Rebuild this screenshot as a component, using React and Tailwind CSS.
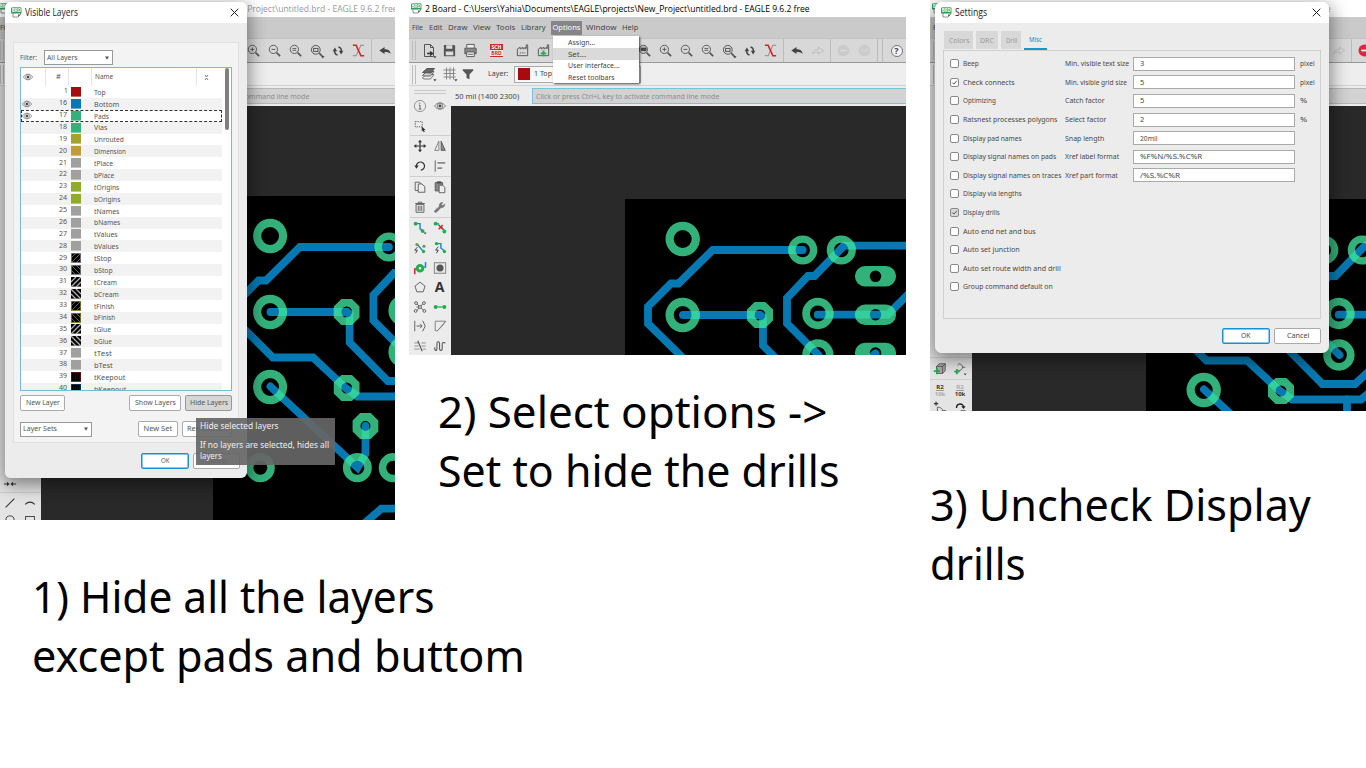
import { useId, useLayoutEffect, useRef, useState } from "react";

/* A line of text that is condensed or widened to an exact width. */
function T({ w, className = "", children }) {
  const ref = useRef(null);
  const [k, setK] = useState(1);
  useLayoutEffect(() => {
    if (ref.current && w) setK(w / ref.current.offsetWidth);
  }, [w, children]);
  return (
    <span className={"inline-block shrink-0 whitespace-nowrap " + className} style={{ width: w }}>
      <span ref={ref} className="inline-block origin-left" style={{ transform: `scaleX(${k})` }}>
        {children}
      </span>
    </span>
  );
}

function Svg({ s = 16, className = "", children }) {
  return (
    <svg width={s} height={s} viewBox="0 0 16 16" fill="none" stroke="#555" strokeWidth="1" className={"shrink-0 " + className}>
      {children}
    </svg>
  );
}

const G = "#1faf4b";
const B = "#1b87c9";
const dot = (x, y, r = 1.9, f = G) => <circle cx={x} cy={y} r={r} fill={f} stroke="none" />;
const caret = <path d="M12.3 13.2h3.2l-1.6 2.2z" fill="#444" stroke="none" />;
const lens = (
  <>
    <circle cx="6.8" cy="6.8" r="4.4" />
    <path d="M10.2 10.2l3.8 3.8" strokeWidth="1.7" />
  </>
);

const icons = {
  newdoc: <><path d="M3.5 1.500h6l3 3v9h-9zM9.500 1.500v3h3" /><path d="M6 10.500h5M9 8.500l2.500 2-2.500 2" strokeWidth="1.500" stroke="#333" />{caret}</>,
  save: <><path d="M2 2h11l1 1v11H2z" fill="#555" stroke="none" /><path d="M4.500 2.500h6.500v3.500h-6.500zM4 9h8v4H4z" fill="#ddd" stroke="none" /></>,
  print: <><path d="M4 5V1.500h8V5" fill="#eee" /><path d="M2 5.500h12v6H2z" fill="#888" /><path d="M4 9.500h8v5H4z" fill="#eee" /><path d="M5.500 12h5" /></>,
  mill: <><path d="M2.500 6.500v7h11v-7M2.500 6.500l3-2v2l3-2v2l3-2v2M12 6V2h1.500v5" /><path d="M5 10.500h6" strokeDasharray="1.500 1" /></>,
  millPlus: <><path d="M2.500 6.500v7h11v-7M2.500 6.500l3-2v2l3-2v2l3-2v2M12 6V2h1.500v5" /><path d="M8 8v6M5 11h6" stroke={G} strokeWidth="2" /></>,
  fit: <><circle cx="6.800" cy="6.800" r="4.400" fill="#bbb" /><path d="M10.200 10.200l3.800 3.800" strokeWidth="1.700" /><path d="M4 5h6v3.500H4z" fill="#444" stroke="none" /></>,
  zin: <>{lens}<path d="M6.800 4.700v4.200M4.700 6.800h4.200" /></>,
  zout: <>{lens}<path d="M4.700 6.800h4.200" /></>,
  zeq: <>{lens}<path d="M4.800 5.800h4M4.800 7.800h4" /></>,
  zsel: <>{lens}<rect x="4.600" y="5.400" width="4.400" height="3" />{caret}</>,
  refresh: <><path d="M7.500 12.500C4.500 12 3.800 9.500 4.400 6.500M8.500 3.500c3 .5 3.700 3 3.100 6" strokeWidth="1.700" stroke="#444" /><path d="M1.800 8.200L4.500 4l2.500 4.200zM14.200 7.800L11.500 12 9 7.800z" fill="#444" stroke="none" /></>,
  rip: <><path d="M14 2.500h-3.500L5.500 13.500H2" stroke="#999" strokeWidth="1.300" /><path d="M2 2.500h3.500l5 11H14" stroke="#d9221f" strokeWidth="1.600" /></>,
  undo: <path d="M1.500 7.500L7.500 3.500v2.600c4 0 6.500 1.400 7 5.400-1.500-2-3.500-2.500-7-2.500v2.500z" fill="#444" stroke="none" />,
  redo: <path d="M14.500 7.500L8.500 3.500v2.600c-4 0-6.500 1.400-7 5.400 1.500-2 3.500-2.500 7-2.500v2.500z" stroke="#bbb" />,
  stopOff: <><circle cx="8" cy="8" r="6.200" fill="#cacaca" stroke="none" /><path d="M4.500 8h7" stroke="#ddd" strokeWidth="1.600" /></>,
  stop: <><circle cx="8" cy="8" r="6.400" fill="#e0263f" stroke="none" /><path d="M4.500 8h7" stroke="#fff" strokeWidth="1.800" /></>,
  go: <><circle cx="8" cy="8" r="6.200" fill="#cacaca" stroke="none" /><circle cx="6" cy="8" r="1.600" stroke="#d8d8d8" /><circle cx="10" cy="8" r="1.600" stroke="#d8d8d8" /></>,
  layers: <><path d="M1.500 12l3.500-3.500h8L9.500 13h-7z" fill="#eee" stroke="#777" /><path d="M1.500 9.500L5.500 5.500h7.500L9.500 10h-7z" fill="#ccc" stroke="#666" /><path d="M1.500 6.500L6 2.500h7.500L10 7z" fill="#666" stroke="#555" />{caret}</>,
  grid: <><path d="M4.500 1.500v12M8 1.500v12M11.500 1.500v12M1.500 4h12M1.500 7.500h12M1.500 11h12" stroke="#888" />{caret}</>,
  filter: <path d="M2 2.500h12v1.500L9.700 8.500V14l-3.400-1.500v-4L2 4z" fill="#555" stroke="none" />,
  info: <><circle cx="8" cy="8" r="6.400" stroke="#888" /><path d="M8 7v4.500M6.700 7H8M6.500 11.500h3" /><circle cx="7.800" cy="4.700" r=".8" fill="#555" stroke="none" /></>,
  eye: <><path d="M1.800 8C5 3 11 3 14.200 8 11 13 5 13 1.800 8z" stroke="#777" /><circle cx="8" cy="8" r="3.200" stroke="#777" /><circle cx="8" cy="8" r="1.700" fill="#444" stroke="none" /></>,
  select: <><rect x="2.500" y="3" width="8" height="6" strokeDasharray="1.600 1.100" /><path d="M10 8.500l4.500 4-2 .2 1 2-1.300.5-.9-2-1.300 1z" fill="#333" stroke="none" /></>,
  move: <><path d="M8 3v10M3 8h10" strokeWidth="1.400" stroke="#333" /><path d="M8 .8l2.300 3H5.700zM8 15.200l2.300-3H5.700zM.8 8l3-2.300v4.600zM15.200 8l-3-2.300v4.600z" fill="#333" stroke="none" /></>,
  mirror: <><path d="M6.700 2.500v10.500H2z" stroke="#777" /><path d="M9.300 2.500v10.500H14z" fill="#888" stroke="#555" /></>,
  rotate: <><path d="M4 8.500A4.600 4.600 0 1 1 9 12.600" strokeWidth="1.400" stroke="#333" /><path d="M1.500 7.500h5L4 11z" fill="#333" stroke="none" /></>,
  align: <><path d="M2.500 1.500v13" /><path d="M5 4.500h9M5 10.500h5.500" strokeWidth="2" stroke="#888" /></>,
  copy: <><path d="M2.500 2.500h5l2.500 2.500v7h-7.500z" /><path d="M6 4.500h4l3.500 3v6.500H6z" fill="#eee" /></>,
  paste: <><path d="M2.500 3h8.500v9.500H2.500z" fill="#888" /><path d="M7 6h4l2.500 2.500v6H7z" fill="#eee" /><path d="M5 2h4v1.500H5z" fill="#444" /></>,
  trash: <><path d="M3.500 5h9v9h-9zM2.500 4h11M6 4V2.500h4V4M6 6.500v6M8 6.500v6M10 6.500v6" /></>,
  wrench: <path d="M2 13.800c-.8-1 .2-2 .8-2.500l4.500-4c-.8-2.800 1.500-5 4-4.500L9.500 4.800l1.700 1.700 2-1.900c.8 2.400-1.500 4.700-4 4.100l-4.400 4.500c-.7.800-1.800 1.400-2.800.6z" fill="#777" stroke="#555" strokeWidth=".5" />,
  route: <><path d="M3 3h5v6l4 2.500" stroke={B} strokeWidth="1.600" />{dot(3, 3, 2.2)}{dot(11, 11.5, 2.2)}{caret}</>,
  ripup: <><path d="M3 3.500h4M10 7l3 4.500" stroke={B} strokeWidth="1.600" />{dot(3, 3, 2.2)}{dot(13, 12, 2.2)}<path d="M6.500 4.500l4.500 5M11 4.500l-4.500 5" stroke="#e02020" strokeWidth="1.600" /></>,
  fanout: <><path d="M5 4l6 7" stroke={B} strokeWidth="1.600" />{dot(4.5, 4, 1.8, "#6a9a4b")}{dot(12.5, 6, 1.8, "#6a9a4b")}{dot(12, 12)}<path d="M5 7L2 10.500h3L3 14" stroke="#333" /></>,
  auto: <><path d="M4 3h5v5l4 3.500" stroke={B} strokeWidth="1.600" />{dot(4, 3)}{dot(13, 12)}<path d="M6 6.500L3 10.500h3L4 14" stroke="#333" /></>,
  via: <><path d="M2 15V9h4" stroke="#d22" strokeWidth="1.700" /><path d="M14.300 1v6H10" stroke={B} strokeWidth="1.700" /><circle cx="8" cy="8.300" r="3.200" fill="#fff" stroke={G} strokeWidth="3.400" /></>,
  hole: <><rect x="1.500" y="2" width="13" height="12" stroke="#777" fill="#e8e8e8" /><circle cx="8" cy="8" r="4" fill="#555" stroke="none" /></>,
  polygon: <path d="M8 2.500l5.800 4.500-2.200 6.500H4.400L2.200 7z" />,
  ratsnest: <><path d="M4 4l4 4 4-4.500M8 8l-4 4.500M8 8l4.500 4M8 8H4" /><g fill="#eee"><circle cx="3.500" cy="3.500" r="1.600" /><circle cx="12.500" cy="3.500" r="1.600" /><circle cx="3" cy="12.500" r="1.600" /><circle cx="13" cy="12.500" r="1.600" /><circle cx="8" cy="8" r="1.600" /></g></>,
  airwire: <><path d="M3 8h10" stroke={G} strokeWidth="1.400" />{dot(3, 8, 2.2)}{dot(13, 8, 2.2)}</>,
  split: <><path d="M2 2v12M4 8h6M8 5.500L10.500 8 8 10.500M11 2l3 6-3 6" /></>,
  miter: <path d="M2.500 2.500h12L10 8.500l-5 5H2.500zM14.500 2.500L5 13.500" stroke="#777" />,
  slice: <><path d="M1.500 4.500h5M9.500 4.500h5M1.500 8h5M9.500 8h5M1.500 11.500h6M11 11.500h4" stroke="#888" /><path d="M5.500 2l5 12" strokeWidth="1.300" /></>,
  meander: <path d="M2 9.500v2c0 2 2.500 2 2.500 0V5c0-2.500 3-2.500 3 0v6.500c0 2 3 2 3 0V5.500c0-1.800 2.500-1.800 3.500-.5" strokeWidth="1.200" />,
  arrows: <><path d="M1 8h5M15 8h-5" strokeWidth="1.400" stroke="#333" /><path d="M7.500 8l-3-2.500v5zM8.500 8l3-2.500v5z" fill="#333" stroke="none" /></>,
  line: <path d="M3 13L13 3" stroke="#333" strokeWidth="1.200" />,
  arc: <path d="M2.500 9.500q5.500-5 11 0" stroke="#333" strokeWidth="1.200" />,
  circle: <circle cx="8" cy="8" r="4.700" stroke="#333" />,
  rect: <rect x="3" y="4" width="10" height="8" stroke="#333" />,
  part: <><path d="M4 5l3-3h7v8l-3 3H4z" fill="#aaa" /><path d="M4 5h7v8M11 5l3-3" /><path d="M4.500 7v7M1 10.500h7" stroke={G} strokeWidth="2" /></>,
  gate: <><path d="M5 3.500h1M6 2c7 0 6 8 0 8M11 6h3" /><path d="M4.500 8v6M1.500 11h6" stroke={G} strokeWidth="2" />{caret}</>,
  pinswap: <><path d="M1 3h5M3.500 .5v5" stroke="#333" strokeWidth="1.300" /><path d="M5 12V7c6 0 8 5 4 7M11 11h4" /></>,
  replace: <><path d="M4 8c0-6 8-6 8-1" strokeWidth="1.600" stroke="#222" /><path d="M9.500 6h5L12 9z" fill="#222" stroke="none" /><path d="M3 12h4M9 11h5v3H9z" /></>,
};
const Icon = ({ n, s = 14 }) => <Svg s={s}>{icons[n]}</Svg>;

function AppIcon({ className = "" }) {
  return (
    <span className={"relative flex h-[11px] w-[11px] shrink-0 flex-col items-center " + className}>
      <svg width="11" height="11" viewBox="0 0 11 11">
        <path d="M2 1h7.500v6.500L7 10H2z" fill="#fff" stroke="#777" strokeWidth=".8" />
        <path d="M9.500 7.500H7V10z" fill="#666" />
        <rect x="0" y=".500" width="10.500" height="6" rx=".6" fill="#2f9e58" />
      </svg>
      <span className="absolute left-0 top-[1px] w-[11px] text-center text-[4.5px] leading-[5px] font-bold text-white">BRD</span>
    </span>
  );
}

/* ---------- board ---------- */
const traces = [
  "177.700,51 87.700,51 53.500,84.500 46,84.500 23,107.500 23,124.500 60.500,161.500 101,161.500 134,192 146,200.500 215,200.500 224,193",
  "58,116 135,116",
  "135,116 138,118 138,146.500 176.500,185 209,185 222,173",
  "201,200.500 201,250",
  "58,190.500 146,271.500 154,258 154,230",
  "281,46.700 219,46.700 189.500,77 183,77 162,99 162,124.500 193.500,156",
  "192.700,115.700 262.700,115.700 283,95.500",
  "243,161 250.500,154.500",
  "151,329 170,312.700 192,312.700",
];
const ring = (x, y, R, r) => {
  const c = (q) => `M${x - q} ${y}a${q} ${q} 0 1 0 ${2 * q} 0a${q} ${q} 0 1 0 ${-2 * q} 0z`;
  return c(R) + c(r);
};
const oct = (x, y, R, r) => {
  const t = R * 0.414;
  return `M${x - t} ${y - R}h${2 * t}L${x + R} ${y - t}v${2 * t}L${x + t} ${y + R}h${-2 * t}L${x - R} ${y + t}v${-2 * t}z` + ring(x, y, 0.01, r);
};
const slot = (x, y) => `M${x - 10.3} ${y - 10.3}h20.600a10.300 10.300 0 0 1 0 20.600h-20.600a10.300 10.300 0 0 1 0-20.600z` + ring(x, y, 0.01, 5.8);
const pads = [
  ring(57.7, 40, 17.2, 9), ring(57.7, 116, 17.2, 9), ring(57.7, 191, 17.2, 9),
  ring(177.7, 51, 14.6, 7.3), ring(216.3, 51, 14.6, 7.3),
  ring(192.9, 114.5, 15.7, 8), ring(192.9, 156, 15.7, 8),
  oct(135, 116, 13, 5.5), oct(135, 192, 13, 5.5), oct(154, 230, 13, 5),
  ring(47.8, 271.7, 14.6, 7), ring(145.8, 271.7, 14.6, 7), ring(182, 271.7, 14.6, 7),
  slot(250.5, 77.3), slot(250.5, 115.7), slot(250.5, 154),
].join("");

function Board() {
  const id = useId();
  const lines = (c) => traces.map((p) => <polyline key={p} points={p} fill="none" stroke={c} strokeWidth="7.800" strokeLinecap="round" />);
  return (
    <svg width="290" height="330" className="block shrink-0 bg-black">
      <clipPath id={id}><path d={pads} clipRule="evenodd" /></clipPath>
      {lines("#0679b2")}
      <path d={pads} fill="#33b17a" fillRule="evenodd" />
      <g clipPath={`url(#${id})`}>{lines("#33cf9c")}</g>
    </svg>
  );
}

/* ---------- main window ---------- */
const Cell = ({ n, s = 14, children }) => (
  <span className="flex w-[21px] shrink-0 items-center justify-center">{n ? <Icon n={n} s={s} /> : children}</span>
);
const Bar = ({ className = "" }) => <span className={"h-full w-px shrink-0 bg-[#bcbcbc] " + className} />;
const Handle = () => (
  <span className="flex h-[19px] w-[9px] shrink-0 justify-center gap-[2px]">
    <span className="w-px bg-[#bdbdbd]" />
    <span className="w-px bg-[#bdbdbd]" />
  </span>
);

const menus = [["File", 11, "pl-[3px]"], ["Edit", 13, "pl-[6px]"], ["Draw", 20, "pl-[6px]"], ["View", 17, "pl-[5px]"], ["Tools", 19, "pl-[6px]"], ["Library", 25, "pl-[6px]"]];

function MainWindow({ active, left, sidebar, board, stop }) {
  return (
    <div className="flex h-full w-[540px] shrink-0 flex-col bg-[#ececec]">
      <div className={"flex h-[17px] shrink-0 items-center bg-white pl-[2px] font-['Open_Sans',sans-serif] text-[9.500px] " + (active ? "text-black" : "text-[#999]")}>
        <AppIcon />
        <T w={385} className="ml-[3px] pt-[1px]">2 Board - C:\Users\Yahia\Documents\EAGLE\projects\New_Project\untitled.brd - EAGLE 9.6.2 free</T>
      </div>
      <div className="flex h-[21px] shrink-0 items-center bg-[#cacaca] text-[7.500px] text-[#444]">
        {menus.map(([m, w, p]) => <span key={m} className={"shrink-0 pt-[1px] " + p}><T w={w}>{m}</T></span>)}
        <span className={"ml-[5px] flex h-[14px] w-[31px] shrink-0 items-center justify-center pt-[1px] " + (active ? "bg-[#858585] text-white" : "")}><T w={28}>Options</T></span>
        <T w={30} className="ml-[4px] pt-[1px]">Window</T>
        <T w={16} className="ml-[6px] pt-[1px]">Help</T>
      </div>
      <div className="flex h-[25px] shrink-0 items-center border-t border-b border-t-[#c2c2c2] border-b-[#999] bg-[#d8d8d8]">
        <Handle />
        <Cell n="newdoc" s={16} /><Cell n="save" s={15} /><Cell n="print" s={15} />
        <span className="w-[5px] shrink-0" />
        <Cell>
          <span className="flex h-[13px] w-[13px] flex-col bg-[#cf2a2a] text-center text-[5px] leading-[6px] font-bold text-white">
            <span>SCH</span><span className="h-[6px] bg-[#e8e8e8] text-[#c33]">BRD</span>
          </span>
        </Cell>
        <span className="w-[5px] shrink-0" />
        <Cell n="mill" s={15} /><Cell n="millPlus" s={15} />
        <span className="w-[80px] shrink-0" />
        <Cell n="fit" s={15} /><Cell n="zin" s={15} /><Cell n="zout" s={15} /><Cell n="zeq" s={15} /><Cell n="zsel" s={16} /><Cell n="refresh" /><Cell n="rip" s={15} />
        <Bar className="mx-[2px]" />
        <Cell n="undo" /><Cell n="redo" />
        <Bar className="mx-[2px]" />
        <Cell n={stop ? "stop" : "stopOff"} s={15} /><Cell n="go" s={15} />
        <Bar className="mx-[2px]" /><Bar className="mr-[3px] ml-[2px]" />
        <Cell>
          <span className="flex h-[12px] w-[12px] items-center justify-center rounded-full border border-[#777] bg-[#f4f4f4] text-[9px] font-bold text-[#444]">?</span>
        </Cell>
      </div>
      <div className="flex h-[23px] shrink-0 items-center border-b border-[#d2d2d2] bg-[#eee] text-[7.500px] text-[#444]">
        <Handle />
        <Cell n="layers" s={16} /><Cell n="grid" s={16} /><span className="-ml-[3px] flex"><Cell n="filter" /></span>
        <T w={20} className="ml-[10px]">Layer:</T>
        <span className="ml-[6px] flex h-[17px] w-[127px] shrink-0 items-center gap-[4px] border border-[#aaa] bg-[#f8f8f8] pl-[3px]">
          <span className="h-[12px] w-[12px] bg-[#a80a0e]" /><T w={18}>1 Top</T>
        </span>
      </div>
      <div className="flex min-h-0 flex-1">
        <div className={"flex shrink-0 flex-col overflow-hidden " + left}>{sidebar}</div>
        <div className="flex min-w-0 flex-1 flex-col">
          <div className="flex h-[20px] shrink-0 items-center text-[7.500px] text-[#444]">
            <T w={64} className="ml-[4px] pt-[1px]">50 mil (1400 2300)</T>
            <span className={"ml-[13px] flex h-[16px] flex-1 items-center border bg-[#d2d2d2] pt-[1px] pl-[3px] text-[#8c8c8c] " + (active ? "border-[#79c3d8]" : "border-[#b8b8b8]")}>
              <T w={183}>Click or press Ctrl+L key to activate command line mode</T>
            </span>
          </div>
          <div className="flex flex-1 overflow-hidden bg-[#292929]"><div className={board}><Board /></div></div>
        </div>
      </div>
    </div>
  );
}

const Row = ({ a, b, h = "h-[20px]" }) => (
  <div className={"flex w-[41px] shrink-0 items-center " + h}>
    {[a, b].map((n, i) => (
      <span key={i} className="flex w-[20px] shrink-0 items-center justify-center">{typeof n === "string" ? <Icon n={n} s={14} /> : n}</span>
    ))}
  </div>
);
const Rule = () => <div className="h-px shrink-0 bg-[#cfcfcf]" />;

/* ---------- dialogs ---------- */
function Titlebar({ title, w }) {
  return (
    <div className="flex h-[21px] shrink-0 items-center bg-white pr-[8px] pl-[6px] font-['Open_Sans',sans-serif] text-[10px] text-[#222]">
      <AppIcon />
      <T w={w} className="ml-[3px]">{title}</T>
      <svg width="9" height="9" viewBox="0 0 9 9" className="ml-auto"><path d="M.7.7l7.600 7.600M8.300.7L.7 8.300" stroke="#222" strokeWidth="1" /></svg>
    </div>
  );
}
const Btn = ({ w, tw, kind = "", children }) => (
  <span
    className={"flex h-[16px] shrink-0 items-center justify-center rounded-[2px] border " + (kind === "ok" ? "border-[#1493cf] bg-white shadow-[inset_0_0_0_0.500px_#1493cf]" : kind === "on" ? "border-[#999] bg-[#d6d6d6]" : "border-[#aaa] bg-white")}
    style={{ width: w }}
  >
    <T w={tw}>{children}</T>
  </span>
);
const Select = ({ w, tw, children }) => (
  <span className="flex h-[15px] shrink-0 items-center border border-[#999] bg-white pr-[3px] pl-[2px]" style={{ width: w }}>
    <T w={tw}>{children}</T>
    <svg width="4" height="4" viewBox="0 0 4 4" className="ml-auto"><path d="M0 .500h4L2 3.700z" fill="#555" /></svg>
  </span>
);

/* [number, name, name width, colour, hatch] */
const layers = [
  [1, "Top", 12, "#a50b0f"], [16, "Bottom", 25, "#0679b2"], [17, "Pads", 15, "#33b17a"], [18, "Vias", 13, "#33b17a"],
  [19, "Unrouted", 30, "#a3a32b"], [20, "Dimension", 32, "#c29c3a"], [21, "tPlace", 19, "#a0a0a0"], [22, "bPlace", 20, "#a0a0a0"],
  [23, "tOrigins", 25, "#8fab2b"], [24, "bOrigins", 26, "#8fab2b"], [25, "tNames", 25, "#a0a0a0"], [26, "bNames", 26, "#a0a0a0"],
  [27, "tValues", 24, "#a0a0a0"], [28, "bValues", 25, "#a0a0a0"],
  [29, "tStop", 18, "#909090", "up"], [30, "bStop", 19, "#909090", "down"],
  [31, "tCream", 23, "#b0b0b0", "UP"], [32, "bCream", 25, "#b0b0b0", "DOWN"],
  [33, "tFinish", 20, "#8f8f35", "up"], [34, "bFinish", 21, "#8f8f35", "down"],
  [35, "tGlue", 17, "#b0b0b0", "UP"], [36, "bGlue", 18, "#b0b0b0", "DOWN"],
  [37, "tTest", 18, "#a0a0a0"], [38, "bTest", 19, "#a0a0a0"],
  [39, "tKeepout", 31, "#7c1418", "dots"], [40, "bKeepout", 32, "#0d4a70", "dots"],
];

function Swatch({ c, hatch }) {
  const bold = hatch === "UP" || hatch === "DOWN";
  const flip = hatch === "down" || hatch === "DOWN";
  return (
    <svg width="10" height="10" viewBox="0 0 10 10" className="ml-[4px] shrink-0">
      <rect width="10" height="9.600" fill={hatch ? "#000" : c} />
      {hatch && hatch !== "dots" && (
        <g transform={flip ? "matrix(-1 0 0 1 10 0)" : undefined}>
          <path d="M0 5L5 0M0 10L10 0M5 10L10 5" stroke={c} strokeWidth={bold ? 1.3 : 0.7} />
        </g>
      )}
      {hatch === "dots" && <path d="M2 3h7M2 5h7M2 7h7" stroke={c} strokeWidth=".7" strokeDasharray=".7 1.300" />}
      {hatch && !bold && <rect x=".400" y=".400" width="9.200" height="8.900" fill="none" stroke={c} strokeWidth=".7" />}
    </svg>
  );
}

function LayersDialog() {
  return (
    <div className="absolute top-[2px] left-[5px] flex h-[476px] w-[242px] flex-col overflow-hidden rounded-[6px] bg-[#ececec] text-[7.500px] text-[#555]">
      <Titlebar title="Visible Layers" w={53} />
      <div className="mx-[8px] mt-[19px] flex h-[401px] shrink-0 flex-col border border-[#e0e0e0] bg-[#f3f3f3] px-[6px] pt-[7px]">
        <div className="flex h-[15px] shrink-0 items-center"><T w={17}>Filter:</T><span className="w-[7px]" /><Select w={69} tw={31}>All Layers</Select></div>
        <div className="mt-[2px] flex h-[324px] shrink-0 border border-[#76bccd] bg-white">
          <div className="flex w-[201px] shrink-0 flex-col overflow-hidden">
            <div className="flex h-[18px] shrink-0 items-center">
              <span className="flex h-full w-[25px] items-center border-r border-[#e5e5e5] pl-[1px]"><Icon n="eye" s={12} /></span>
              <span className="flex h-full w-[23px] items-center justify-center border-r border-[#e5e5e5] pl-[3px]">#</span>
              <span className="h-full w-[23px] border-r border-[#e5e5e5]" />
              <span className="flex h-full w-[105px] items-center border-r border-[#e5e5e5] pl-[3px]"><T w={18}>Name</T></span>
              <span className="flex-1 pl-[7px]"><svg width="5" height="5" viewBox="0 0 5 5"><path d="M1 0l1.500 2L4 0M1 5l1.500-2L4 5" stroke="#555" strokeWidth=".8" fill="none" /></svg></span>
            </div>
            {layers.map(([n, name, w, c, hatch], i) => (
              <div key={n} className={"flex h-[11.880px] shrink-0 items-center " + (n === 17 ? "outline-[1px] -outline-offset-1 outline-dashed outline-[#333]" : i % 2 ? "bg-[#f2f2f2]" : "")}>
                <span className="flex w-[24px] justify-start">{(n === 16 || n === 17) && <Icon n="eye" s={12} />}</span>
                <span className="flex w-[22px] justify-end pb-[2px]"><T w={n > 9 ? 8.5 : 3.5}>{n}</T></span>
                <Swatch c={c} hatch={hatch} />
                <T w={w} className="ml-[13px] pt-[1px]">{name}</T>
              </div>
            ))}
          </div>
          <span className="ml-[3px] h-[62px] w-[4px] rounded-[2px] bg-[#808080]" />
        </div>
        <div className="mt-[4px] flex shrink-0 items-center"><Btn w={45} tw={34}>New Layer</Btn><span className="flex-1" /><Btn w={52} tw={41}>Show Layers</Btn><span className="w-[4px]" /><Btn w={47} tw={38} kind="on">Hide Layers</Btn></div>
        <div className="mt-[10px] flex shrink-0 items-center"><Select w={72} tw={34}>Layer Sets</Select><span className="flex-1" /><Btn w={40} tw={29}>New Set</Btn><span className="w-[4px]" /><Btn w={50} tw={40}>Remove Set</Btn></div>
      </div>
      <div className="mt-[10px] flex shrink-0 justify-end gap-[4px] pr-[7px]"><Btn w={48} tw={9} kind="ok">OK</Btn><Btn w={47} tw={21}>Cancel</Btn></div>
    </div>
  );
}

const checks = [["Beep", 16], ["Check connects", 52], ["Optimizing", 33], ["Ratsnest processes polygons", 94], ["Display pad names", 59], ["Display signal names on pads", 93], ["Display signal names on traces", 98], ["Display via lengths", 59], ["Display drills", 37], ["Auto end net and bus", 73], ["Auto set junction", 57], ["Auto set route width and drill", 98], ["Group command default on", 90]];
const fields = [["Min. visible text size", 64, "3", 4, "pixel", 15], ["Min. visible grid size", 62, "5", 4, "pixel", 15], ["Catch factor", 40, "5", 4, "%", 7], ["Select factor", 42, "2", 4, "%", 7], ["Snap length", 39, "20mil", 17, "", 0], ["Xref label format", 54, "%F%N/%S.%C%R", 62, "", 0], ["Xref part format", 53, "/%S.%C%R", 40, "", 0]];

function SettingsDialog() {
  return (
    <div className="absolute top-[2px] left-[5px] flex h-[351px] w-[394px] flex-col overflow-hidden rounded-[7px] bg-[#ececec] text-[7.500px] text-[#484848]">
      <Titlebar title="Settings" w={32} />
      <div className="ml-[9px] flex h-[27px] shrink-0 items-start gap-[3px] pt-[8px] text-[#999]">
        <span className="flex h-[18px] w-[29px] items-center justify-center bg-[#d8d8d8] pt-[1px]"><T w={20}>Colors</T></span>
        <span className="flex h-[18px] w-[22px] items-center justify-center bg-[#d8d8d8] pt-[1px]"><T w={14}>DRC</T></span>
        <span className="flex h-[18px] w-[20px] items-center justify-center bg-[#d8d8d8] pt-[1px]"><T w={11}>Drill</T></span>
        <span className="flex h-[19px] w-[23px] items-center justify-center border-b-2 border-[#1397d4] pt-[1px] text-[#1387c4]"><T w={13}>Misc</T></span>
      </div>
      <div className="mx-[8px] flex h-[269px] shrink-0 border border-[#d0d0d0] pt-[3.500px]">
        <div className="flex w-[121px] shrink-0 flex-col pl-[6px]">
          {checks.map(([c, w]) => {
            const on = c === "Check connects" || c === "Display drills";
            return (
              <div key={c} className="flex h-[18.600px] shrink-0 items-center">
                <svg width="9" height="9" viewBox="0 0 9 9" className="shrink-0">
                  <rect x=".500" y=".500" width="8" height="8" rx="1.500" fill={c === "Display drills" ? "#d8d8d8" : "#fff"} stroke="#888" />
                  {on && <path d="M2.300 4.500l1.600 1.600L6.800 2.800" stroke="#555" fill="none" />}
                </svg>
                <T w={w} className="ml-[4px]">{c}</T>
              </div>
            );
          })}
        </div>
        <div className="flex flex-col">
          {fields.map(([l, lw, v, vw, u, uw]) => (
            <div key={l} className="flex h-[18.600px] shrink-0 items-center">
              <span className="w-[68px] shrink-0"><T w={lw}>{l}</T></span>
              <span className="flex h-[14px] w-[162px] items-center border border-[#aaa] bg-white pl-[6px]"><T w={vw}>{v}</T></span>
              {u && <T w={uw} className="ml-[5px]">{u}</T>}
            </div>
          ))}
        </div>
      </div>
      <div className="mt-[9px] flex shrink-0 justify-end gap-[4px] pr-[8px]"><Btn w={48} tw={10} kind="ok">OK</Btn><Btn w={47} tw={22}>Cancel</Btn></div>
    </div>
  );
}

const Caption = ({ className, lines }) => (
  <div className={"flex flex-col text-[44.500px] leading-[59px] text-black " + className}>
    {lines.map(([t, w]) => <T key={t} w={w}>{t}</T>)}
  </div>
);

const Ref = ({ a, b }) => (
  <span className="flex flex-col items-center text-[6px] leading-[6px] font-bold">
    <span className={a + " border-b border-[#999]"}>R2</span><span className={b}>10k</span>
  </span>
);

export default function App() {
  return (
    <div className="flex h-[768px] w-[1366px] overflow-hidden bg-white font-['Noto_Sans',sans-serif]">
      <section className="flex w-[395px] shrink-0 flex-col">
        <div className="relative h-[520px] shrink-0 overflow-hidden">
          <div className="-ml-[3px] h-full">
            <MainWindow
              left="w-[44px] justify-end pl-[3px] bg-[#e4e4e4]"
              board="ml-[172px] mt-[90px] origin-left scale-x-[0.99]"
              sidebar={<><Row a="arrows" b="" h="h-[16px]" /><Rule /><Row a="line" b="arc" /><Row a="circle" b="rect" h="h-[14px] -mb-[7px]" /></>}
            />
          </div>
          <div className="absolute top-[2px] left-[5px] h-[476px] w-[242px] rounded-[6px] shadow-[0_5px_18px_2px_rgba(0,0,0,0.450)]" />
          <LayersDialog />
          <div className="absolute top-[418px] left-[196px] flex h-[47px] w-[139px] flex-col bg-[#666]/92 pt-[2px] pl-[4px] text-[8.500px] leading-[11.500px] text-[#eee]">
            <T w={79}>Hide selected layers</T>
            <T w={129} className="mt-[7px]">If no layers are selected, hides all</T>
            <T w={22}>layers</T>
          </div>
        </div>
        <Caption className="mt-[46px] ml-[32px]" lines={[["1) Hide all the layers", 403], ["except pads and buttom", 493]]} />
      </section>

      <section className="ml-[14px] flex w-[497px] shrink-0 flex-col">
        <div className="relative h-[355px] shrink-0 overflow-hidden">
          <MainWindow
            active
            left="w-[42px] pl-[0.500px]"
            board="ml-[174px] mt-[93px]"
            sidebar={
              <>
                <div className="mx-[4px] mt-[4px] mb-[2px] h-[4px] w-[32px] shrink-0 border-y border-[#c8c8c8]" />
                <Row a="info" b="eye" /><Row a="select" b="" h="h-[19px]" /><Rule />
                <Row a="move" b="mirror" /><Row a="rotate" b="align" /><Rule />
                <Row a="copy" b="paste" /><Row a="trash" b="wrench" /><Rule />
                <Row a="route" b="ripup" /><Row a="fanout" b="auto" /><Row a="via" b="hole" h="h-[19.500px]" />
                <Row a="polygon" b={<span className="font-['Open_Sans',sans-serif] text-[14px] leading-none font-bold text-[#333]">A</span>} h="h-[19.500px]" />
                <Row a="ratsnest" b="airwire" h="h-[19.500px]" /><Row a="split" b="miter" h="h-[19.500px]" /><Row a="slice" b="meander" />
              </>
            }
          />
          <div className="absolute top-[36px] left-[144px] flex h-[47px] w-[86px] flex-col bg-white text-[7.500px] text-[#444] shadow-[1px_1px_2px_rgba(0,0,0,0.700)]">
            {[["Assign...", 27], ["Set...", 18], ["User interface...", 52], ["Reset toolbars", 47]].map(([t, w], i) => (
              <span key={t} className={"flex h-[11.800px] items-center pl-[15px] " + (i < 2 ? "pt-[2px] " : "") + (i === 1 ? "bg-[#dadada]" : "")}><T w={w}>{t}</T></span>
            ))}
          </div>
        </div>
        <Caption className="mt-[26px] ml-[29px]" lines={[["2) Select options ->", 389], ["Set to hide the drills", 401]]} />
      </section>

      <section className="ml-[24px] flex w-[436px] shrink-0 flex-col">
        <div className="relative h-[411px] shrink-0 overflow-hidden">
          <MainWindow
            stop
            left="w-[42px] justify-end bg-[#e4e4e4]"
            board="ml-[174px] mt-[93px]"
            sidebar={<><Rule /><Row a="part" b="gate" h="h-[21px]" /><Rule /><Row a={<Ref a="text-[#333]" b="text-[#aaa]" />} b={<Ref a="text-[#aaa]" b="text-[#333]" />} /><Row a="pinswap" b="replace" h="h-[15px] -mb-[4px]" /></>}
          />
          <div className="absolute top-[2px] left-[5px] h-[351px] w-[394px] rounded-[7px] shadow-[0_5px_18px_2px_rgba(0,0,0,0.450)]" />
          <SettingsDialog />
        </div>
        <Caption className="mt-[63px]" lines={[["3) Uncheck Display", 381], ["drills", 96]]} />
      </section>
    </div>
  );
}
